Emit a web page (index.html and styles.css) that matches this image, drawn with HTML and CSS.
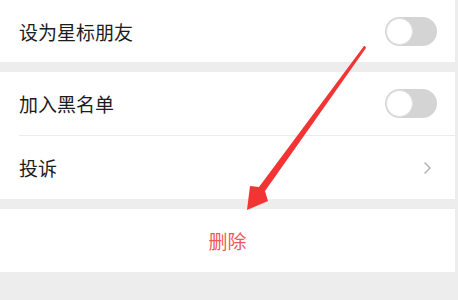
FILE: index.html
```html
<!DOCTYPE html>
<html>
<head>
  <meta charset="utf-8">
  <title>资料设置</title>
  <link rel="stylesheet" href="styles.css">
</head>
<body>
  <div class="page">
    <div class="group first">
      <div class="row">
        <span class="label">设为星标朋友</span>
        <span class="switch"><span class="knob"></span></span>
      </div>
    </div>

    <div class="group">
      <div class="row">
        <span class="label">加入黑名单</span>
        <span class="switch"><span class="knob"></span></span>
      </div>
      <div class="row">
        <span class="label">投诉</span>
        <svg class="chevron" width="9" height="14" viewBox="0 0 9 14">
          <path d="M1.5 1.5 L7 7 L1.5 12.5" fill="none" stroke="#b5b5b5" stroke-width="1.5"/>
        </svg>
      </div>
    </div>

    <div class="group">
      <div class="row action">删除</div>
    </div>
  </div>

  <!-- red annotation arrow drawn over the list -->
  <svg class="arrow" width="458" height="300" viewBox="0 0 458 300">
    <polygon fill="#f23434" points="365,46 366,48 265,191 268,201 247,210 250,186 259,187 364,46"/>
  </svg>
</body>
</html>
```

FILE: styles.css
```css
body {
  margin: 0;
  padding: 0;
  background: #ededed;
  font-family: "Noto Sans CJK SC", "Noto Sans", sans-serif;
  color: #1c1c1c;
}

.page {
  margin-right: 3px;
  height: 300px;
}

.group {
  background: #fff;
  margin-top: 10px;
}

.group.first {
  margin-top: 0;
}

.row {
  display: flex;
  align-items: center;
  justify-content: space-between;
  height: 63px;
  margin-left: 19px;
  padding-right: 18px;
  font-size: 19px;
}

.row + .row {
  border-top: 1px solid #ececec;
}

.group.first .row {
  height: 62px;
}

.label {
  line-height: 1;
}

.switch {
  position: relative;
  width: 52px;
  height: 29px;
  border-radius: 15px;
  background: #d4d4d4;
}

.knob {
  position: absolute;
  left: 1px;
  top: 1px;
  width: 25px;
  height: 25px;
  border-radius: 50%;
  background: #fff;
  border: 1px solid #e2e2e2;
}

.chevron {
  margin-right: 5px;
}

.row.action {
  justify-content: center;
  margin-left: 0;
  padding-right: 0;
  color: #f25757;
}

.arrow {
  position: absolute;
  left: 0;
  top: 0;
}
```
